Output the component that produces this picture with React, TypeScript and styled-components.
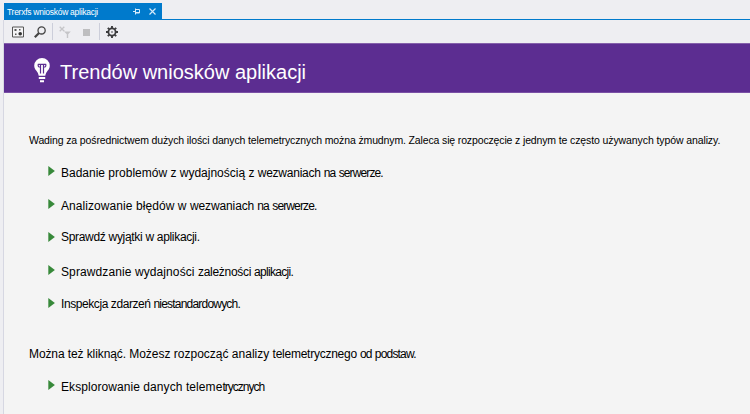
import React from "react";
import styled, { createGlobalStyle } from "styled-components";

const GlobalStyle = createGlobalStyle`
  * { box-sizing: border-box; }
  body { margin: 0; overflow: hidden; background: #eeeef2; }
`;

const Window = styled.div`
  width: 750px;
  height: 414px;
  padding: 3px 0 0 3px;
  display: flex;
  flex-direction: column;
  background: #eeeef2;
  color: #000;
  font-family: "Liberation Sans", Arial, sans-serif;
`;

const TabStrip = styled.div`
  height: 17px;
  flex: none;
  margin-left: 1px;
  border-bottom: 1px solid #007acc;
`;

const Tab = styled.div`
  width: 158px;
  height: 16px;
  display: flex;
  align-items: center;
  padding-left: 3px;
  background: #007acc;
  color: #fff;
`;

const TabTitle = styled.div`
  width: 125px;
  height: 16px;
  line-height: 13px;
`;

const TabIcon = styled.svg<{ $gap?: number }>`
  flex: none;
  width: 9px;
  height: 9px;
  margin-left: ${(p) => p.$gap ?? 0}px;
`;

const Frame = styled.div`
  flex: 1;
  min-height: 0;
  border-left: 1px solid #d6d7e2;
`;

const Toolbar = styled.div`
  height: 23px;
  display: flex;
  align-items: center;
  padding-left: 8px;
`;

const ToolIcon = styled.svg<{ $gap?: number }>`
  flex: none;
  width: 12px;
  height: 12px;
  margin-left: ${(p) => p.$gap ?? 0}px;
`;

const Separator = styled.div<{ $gap: number }>`
  width: 1px;
  height: 17px;
  margin-left: ${(p) => p.$gap}px;
  background: #ccceda;
`;

const Banner = styled.header`
  height: 50px;
  display: flex;
  align-items: center;
  padding-left: 30px;
  background: #5c2d91;
  border-top: 1px solid #8560ab;
  border-bottom: 1px solid #7a50a5;
  color: #fff;
`;

const Bulb = styled.svg`
  width: 16px;
  height: 25px;
  flex: none;
  margin-top: 4px;
`;

const Title = styled.h1`
  margin: 8px 0 0 10px;
  font-size: 20px;
  font-weight: 400;
  line-height: 24px;
  white-space: nowrap;
`;

const Content = styled.main`
  height: 321px;
  padding: 38px 0 0 25px;
  background: #f4f4f4;
`;

const Paragraph = styled.p`
  margin: 0;
  height: 16px;
  line-height: 16px;
  white-space: nowrap;
`;

const List = styled.ul`
  margin: 17px 0 0;
  padding: 0 0 0 19px;
  list-style: none;
`;

const Section = styled.section<{ $top?: number }>`
  margin-top: ${(p) => p.$top ?? 0}px;
`;

const Item = styled.li<{ $height: number }>`
  height: ${(p) => p.$height}px;
  display: flex;
  align-items: flex-start;
  line-height: 16px;
  white-space: nowrap;
`;

const Arrow = styled.svg<{ $top: number }>`
  width: 7px;
  height: 10px;
  flex: none;
  margin: ${(p) => p.$top}px 6px 0 0;
`;

const Run = styled.span<{ $size: number; $spacing: number }>`
  font-size: ${(p) => p.$size}px;
  letter-spacing: ${(p) => p.$spacing}px;
  white-space: pre;
`;

type Part = [text: string, spacing: number];

const Text = ({ size, parts }: { size: number; parts: Part[] }) => (
  <span>
    {parts.map(([text, spacing]) => (
      <Run key={text} $size={size} $spacing={spacing}>
        {text}
      </Run>
    ))}
  </span>
);

type Entry = { height: number; arrow: number; parts: Part[] };

const analyses: Entry[] = [
  {
    height: 33,
    arrow: 2,
    parts: [["Badanie problemów z wydajnością z ", 0], ["wezwaniach ", -0.25], ["na", -0.9], [" ", 0], ["serwerze.", -0.87]],
  },
  {
    height: 31,
    arrow: 2,
    parts: [["Analizowanie błędów w ", 0.07], ["wezwaniach ", -0.12], ["na", -0.9], [" ", 0], ["serwerze.", -0.87]],
  },
  { height: 35, arrow: 4, parts: [["Sprawdź wyjątki w aplikacji.", -0.31]] },
  {
    height: 32,
    arrow: 2,
    parts: [["Sprawdzanie wydajności ", 0.1], ["zależności ", -0.3], ["aplikacji.", -0.7]],
  },
  {
    height: 16,
    arrow: 3,
    parts: [["Inspekcja zdarzeń ", -0.42], ["niestandardowych.", -0.8]],
  },
];

const explore: Entry[] = [
  {
    height: 16,
    arrow: 2,
    parts: [["Eksplorowanie danych ", 0.07], ["teleme", 0.1], ["trycznych", -1]],
  },
];

const Entries = ({ entries }: { entries: Entry[] }) => (
  <List>
    {entries.map((e) => (
      <Item key={e.parts[0][0]} $height={e.height}>
        <Arrow $top={e.arrow} viewBox="0 0 7 10">
          <path d="M.3 0 6.9 5 .3 10z" fill="#37893a" />
        </Arrow>
        <Text size={12} parts={e.parts} />
      </Item>
    ))}
  </List>
);

export default function App() {
  return (
    <Window>
      <GlobalStyle />
      <TabStrip>
        <Tab>
          <TabTitle>
            <Text size={8.5} parts={[["Trerxfs wniosków ", -0.27], ["aplikacji", -0.27]]} />
          </TabTitle>
          <TabIcon viewBox="0 0 9 9" fill="none" stroke="#d5eafa">
            <path d="M1 4.5h2.5M3.5 1.5v6M3.5 2.5h4v3.5h-4M3.5 5.5h4" />
          </TabIcon>
          <TabIcon $gap={7} viewBox="0 0 9 9" fill="none" stroke="#d5eafa" strokeWidth="1.2">
            <path d="m1.5 1.5 6 6m0-6-6 6" />
          </TabIcon>
        </Tab>
      </TabStrip>
      <Frame>
        <Toolbar>
          <ToolIcon viewBox="0 0 12 12">
            <path d="M.5 1h11v10H.5z" fill="#f4f4f6" stroke="#555" />
            <path d="M2.5 3h2v2h-2zM7 3h1.5v1.5H7zM3 7.5h1.5V9H3z" fill="#555" />
            <circle cx="8.2" cy="7.7" r="1.8" fill="#333" />
          </ToolIcon>
          <ToolIcon $gap={10} viewBox="0 0 12 12" fill="none" stroke="#444">
            <circle cx="7.6" cy="4.4" r="3.6" strokeWidth="1.3" />
            <path d="m5 7-4.2 4.2" strokeWidth="2.2" />
          </ToolIcon>
          <Separator $gap={6} />
          <ToolIcon $gap={6} viewBox="0 0 12 12" fill="none" stroke="#c5c5c8">
            <path d="m.7.7 4.6 4.6m0-4.6L.7 5.3" strokeWidth="1.3" />
            <path d="M5 5.5h6.8L9.2 8.3V12H7.8V8.3z" fill="#c5c5c8" stroke="none" />
          </ToolIcon>
          <ToolIcon $gap={9} viewBox="0 0 12 12">
            <path d="M3 3h7v7H3z" fill="#bebec0" />
          </ToolIcon>
          <Separator $gap={7} />
          <ToolIcon $gap={6} viewBox="0 0 12 12" fill="none" stroke="#3c3c3e">
            <circle cx="6" cy="6" r="3.6" strokeWidth="1.8" />
            <circle cx="6" cy="6" r=".8" fill="#3c3c3e" stroke="none" />
            <path
              d="M6 0v2M6 10v2M0 6h2M10 6h2M1.8 1.8l1.4 1.4M8.8 8.8l1.4 1.4M10.2 1.8 8.8 3.2M3.2 8.8l-1.4 1.4"
              strokeWidth="1.9"
            />
          </ToolIcon>
        </Toolbar>
        <Banner>
          <Bulb viewBox="0 0 16 25" fill="none" stroke="#fff">
            <path
              d="M8 0A7.8 7.8 0 0 0 .2 7.7c0 3 2 4.6 3.2 6.5.8 1.2 1 2.2 1.3 3.5h6.6c.3-1.3.5-2.3 1.3-3.5 1.2-1.9 3.2-3.5 3.2-6.5A7.8 7.8 0 0 0 8 0z"
              fill="#fff"
              stroke="none"
            />
            <path d="M3.8 6.3h8.4M6.5 6.8v8.7M9.5 6.8v8.7M4.2 6.3v1.6q0 1.2 2.2 1.2M11.8 6.3v1.6q0 1.2-2.2 1.2" stroke="#5c2d91" strokeWidth="1.2" />
            <path d="M4.8 20h6.4M6 23.2h4" strokeWidth="1.9" />
          </Bulb>
          <Title>Trendów wniosków aplikacji</Title>
        </Banner>
        <Content>
          <Section>
            <Paragraph>
              <Text
                size={10.5}
                parts={[
                  ["Wading za pośrednictwem dużych ilości danych ", -0.13],
                  ["telemetrycznych można żmudnym. ", -0.13],
                  ["Zaleca się rozpoczęcie z jednym te ", -0.14],
                  ["często używanych typów analizy.", -0.1],
                ]}
              />
            </Paragraph>
            <Entries entries={analyses} />
          </Section>
          <Section $top={34}>
            <Paragraph>
              <Text
                size={12}
                parts={[
                  ["Można też kliknąć. ", -0.1],
                  ["Możesz rozpocząć analizy ", 0],
                  ["telemetrycznego ", -0.25],
                  ["od", -0.9],
                  [" ", 0],
                  ["podstaw.", -0.82],
                ]}
              />
            </Paragraph>
            <Entries entries={explore} />
          </Section>
        </Content>
      </Frame>
    </Window>
  );
}
